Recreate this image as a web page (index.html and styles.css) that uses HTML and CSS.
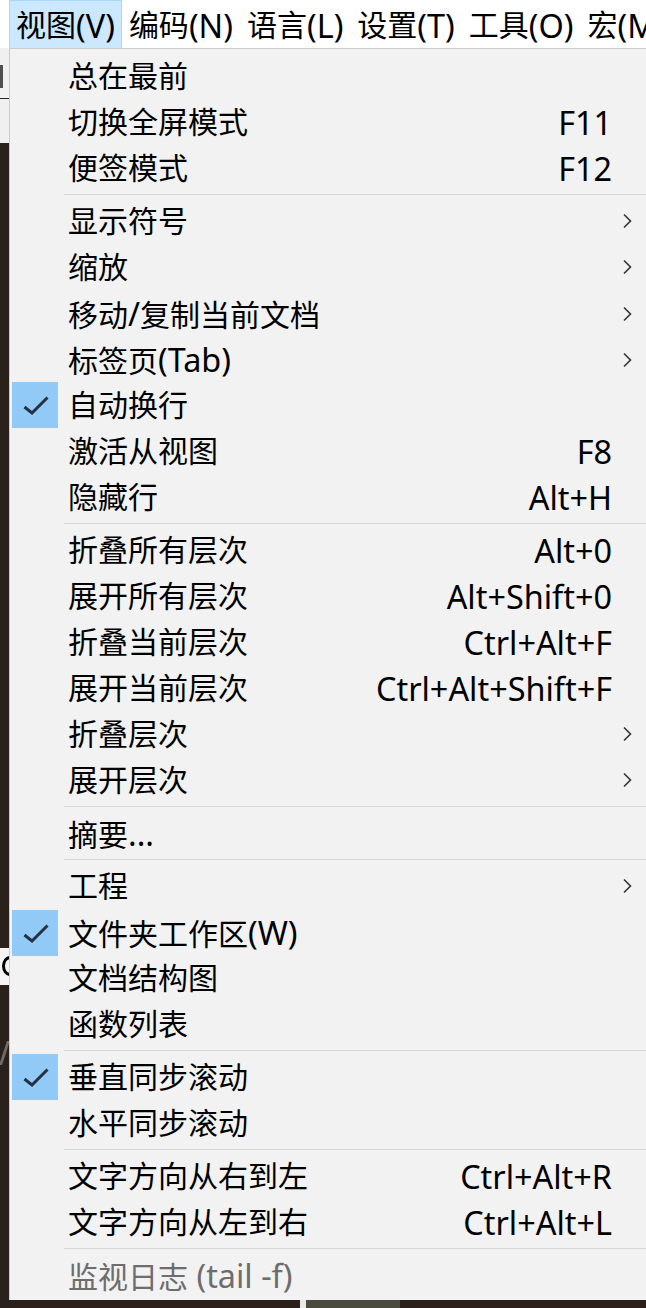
FILE: index.html
```html
<!DOCTYPE html>
<html lang="zh-CN">
<head>
<meta charset="utf-8">
<title>视图菜单</title>
<link rel="stylesheet" href="styles.css">
</head>
<body>
<div class="screen">
  <div class="menubar">
    <div class="mb-item active">视图<span class="lat">(V)</span></div>
    <div class="mb-item">编码<span class="lat">(N)</span></div>
    <div class="mb-item">语言<span class="lat">(L)</span></div>
    <div class="mb-item">设置<span class="lat">(T)</span></div>
    <div class="mb-item">工具<span class="lat">(O)</span></div>
    <div class="mb-item">宏<span class="lat">(M)</span></div>
  </div>
  <div class="main">
    <div class="strip">
      <div class="s-light s1"><span class="s-knob"></span></div>
      <div class="s-line"></div>
      <div class="s-light s2"></div>
      <div class="s-line s-line2"></div>
      <div class="s-dark s3"></div>
      <div class="s-paper s4"><span class="s-arc"></span></div>
      <div class="s-dark s5"><span class="s-slash"></span></div>
    </div>
    <div class="menu">
      <div class="row"><span class="gut"></span><span class="lbl">总在最前</span><span class="key"></span><span class="arr"></span></div>
      <div class="row"><span class="gut"></span><span class="lbl">切换全屏模式</span><span class="key">F11</span><span class="arr"></span></div>
      <div class="row"><span class="gut"></span><span class="lbl">便签模式</span><span class="key">F12</span><span class="arr"></span></div>
      <div class="sep"></div>
      <div class="row"><span class="gut"></span><span class="lbl">显示符号</span><span class="key"></span><span class="arr"><svg width="10" height="16" viewBox="0 0 10 16"><path d="M2 1.5 L8.5 8 L2 14.5" fill="none" stroke="#333" stroke-width="1.6"/></svg></span></div>
      <div class="row"><span class="gut"></span><span class="lbl">缩放</span><span class="key"></span><span class="arr"><svg width="10" height="16" viewBox="0 0 10 16"><path d="M2 1.5 L8.5 8 L2 14.5" fill="none" stroke="#333" stroke-width="1.6"/></svg></span></div>
      <div class="row"><span class="gut"></span><span class="lbl">移动<span class="lat">/</span>复制当前文档</span><span class="key"></span><span class="arr"><svg width="10" height="16" viewBox="0 0 10 16"><path d="M2 1.5 L8.5 8 L2 14.5" fill="none" stroke="#333" stroke-width="1.6"/></svg></span></div>
      <div class="row"><span class="gut"></span><span class="lbl">标签页<span class="lat">(Tab)</span></span><span class="key"></span><span class="arr"><svg width="10" height="16" viewBox="0 0 10 16"><path d="M2 1.5 L8.5 8 L2 14.5" fill="none" stroke="#333" stroke-width="1.6"/></svg></span></div>
      <div class="row"><span class="gut"><span class="chk"><svg width="46" height="46" viewBox="0 0 46 46"><path d="M12.5 25 L20 31 L35.5 15.5" fill="none" stroke="#24313f" stroke-width="3"/></svg></span></span><span class="lbl">自动换行</span><span class="key"></span><span class="arr"></span></div>
      <div class="row"><span class="gut"></span><span class="lbl">激活从视图</span><span class="key">F8</span><span class="arr"></span></div>
      <div class="row"><span class="gut"></span><span class="lbl">隐藏行</span><span class="key">Alt+H</span><span class="arr"></span></div>
      <div class="sep"></div>
      <div class="row"><span class="gut"></span><span class="lbl">折叠所有层次</span><span class="key">Alt+0</span><span class="arr"></span></div>
      <div class="row"><span class="gut"></span><span class="lbl">展开所有层次</span><span class="key">Alt+Shift+0</span><span class="arr"></span></div>
      <div class="row"><span class="gut"></span><span class="lbl">折叠当前层次</span><span class="key">Ctrl+Alt+F</span><span class="arr"></span></div>
      <div class="row"><span class="gut"></span><span class="lbl">展开当前层次</span><span class="key">Ctrl+Alt+Shift+F</span><span class="arr"></span></div>
      <div class="row"><span class="gut"></span><span class="lbl">折叠层次</span><span class="key"></span><span class="arr"><svg width="10" height="16" viewBox="0 0 10 16"><path d="M2 1.5 L8.5 8 L2 14.5" fill="none" stroke="#333" stroke-width="1.6"/></svg></span></div>
      <div class="row"><span class="gut"></span><span class="lbl">展开层次</span><span class="key"></span><span class="arr"><svg width="10" height="16" viewBox="0 0 10 16"><path d="M2 1.5 L8.5 8 L2 14.5" fill="none" stroke="#333" stroke-width="1.6"/></svg></span></div>
      <div class="sep"></div>
      <div class="row"><span class="gut"></span><span class="lbl">摘要<span class="lat">...</span></span><span class="key"></span><span class="arr"></span></div>
      <div class="sep"></div>
      <div class="row"><span class="gut"></span><span class="lbl">工程</span><span class="key"></span><span class="arr"><svg width="10" height="16" viewBox="0 0 10 16"><path d="M2 1.5 L8.5 8 L2 14.5" fill="none" stroke="#333" stroke-width="1.6"/></svg></span></div>
      <div class="row"><span class="gut"><span class="chk"><svg width="46" height="46" viewBox="0 0 46 46"><path d="M12.5 25 L20 31 L35.5 15.5" fill="none" stroke="#24313f" stroke-width="3"/></svg></span></span><span class="lbl">文件夹工作区<span class="lat">(W)</span></span><span class="key"></span><span class="arr"></span></div>
      <div class="row"><span class="gut"></span><span class="lbl">文档结构图</span><span class="key"></span><span class="arr"></span></div>
      <div class="row"><span class="gut"></span><span class="lbl">函数列表</span><span class="key"></span><span class="arr"></span></div>
      <div class="sep"></div>
      <div class="row"><span class="gut"><span class="chk"><svg width="46" height="46" viewBox="0 0 46 46"><path d="M12.5 25 L20 31 L35.5 15.5" fill="none" stroke="#24313f" stroke-width="3"/></svg></span></span><span class="lbl">垂直同步滚动</span><span class="key"></span><span class="arr"></span></div>
      <div class="row"><span class="gut"></span><span class="lbl">水平同步滚动</span><span class="key"></span><span class="arr"></span></div>
      <div class="sep"></div>
      <div class="row"><span class="gut"></span><span class="lbl">文字方向从右到左</span><span class="key">Ctrl+Alt+R</span><span class="arr"></span></div>
      <div class="row"><span class="gut"></span><span class="lbl">文字方向从左到右</span><span class="key">Ctrl+Alt+L</span><span class="arr"></span></div>
      <div class="sep"></div>
      <div class="row disabled"><span class="gut"></span><span class="lbl">监视日志<span class="lat"> (tail -f)</span></span><span class="key"></span><span class="arr"></span></div>
    </div>
  </div>
  <div class="bottom">
    <div class="b-dark b1"></div>
    <div class="b-white"></div>
    <div class="b-olive"></div>
    <div class="b-dark b2"></div>
  </div>
</div>
</body>
</html>
```
FILE: styles.css
```css
html, body {
  margin: 0;
  padding: 0;
}
body {
  width: 646px;
  height: 1308px;
  overflow: hidden;
  background: #2b211c;
  font-family: "Noto Sans", "Noto Sans CJK SC", sans-serif;
  font-size: 30px;
  color: #000;
}
.lat {
  font-size: 32.4px;
}
.screen {
  display: flex;
  flex-direction: column;
  width: 646px;
  height: 1308px;
}
.menubar {
  height: 48px;
  background: #fff;
  display: flex;
  align-items: stretch;
  padding-left: 9px;
  white-space: nowrap;
  overflow: hidden;
  flex: none;
}
.mb-item {
  display: flex;
  align-items: center;
  padding: 0 6px;
  border: 1px solid transparent;
  border-bottom: none;
  line-height: 46px;
  flex: none;
}
.mb-item.active {
  background: #cce8ff;
  border-color: #a9d6fb;
}
.main {
  display: flex;
  height: 1252px;
  flex: none;
}
.strip {
  width: 9px;
  flex: none;
  display: flex;
  flex-direction: column;
  overflow: hidden;
}
.s-light {
  background: #f0f0f0;
}
.s1 {
  height: 50px;
  display: flex;
  align-items: flex-start;
  padding-top: 17px;
  box-sizing: border-box;
}
.s-knob {
  display: block;
  width: 3px;
  height: 23px;
  background: #505050;
}
.s-line {
  height: 1px;
  background: #222;
}
.s2 {
  height: 44px;
}
.s-line2 {
  height: 2px;
}
.s-dark {
  background: #2b211c;
}
.s3 {
  height: 803px;
}
.s4 {
  height: 37px;
  background: #f5f5f5;
  padding: 8px 0 0 2px;
  box-sizing: border-box;
  overflow: hidden;
}
.s-arc {
  display: block;
  width: 16px;
  height: 20px;
  border: 3px solid #000;
  border-radius: 50%;
  box-sizing: border-box;
}
.s5 {
  flex: 1;
  padding: 56px 0 0 3px;
  overflow: hidden;
}
.s-slash {
  display: block;
  width: 3px;
  height: 24px;
  background: #6e6a66;
  transform: skewX(-18deg);
}
.menu {
  flex: 1;
  background: #f2f2f2;
  border-top: 1px solid #cccccc;
  border-left: 1px solid #cccccc;
  padding-top: 4px;
  box-sizing: border-box;
}
.row {
  height: 46px;
  display: grid;
  grid-template-columns: 58px 1fr auto 34px;
  align-items: center;
  white-space: nowrap;
}
.gut {
  height: 46px;
  display: flex;
  align-items: center;
}
.chk {
  display: block;
  width: 46px;
  height: 46px;
  margin-left: 2px;
  background: #91c9f7;
}
.chk svg {
  display: block;
}
.lbl {
  line-height: 46px;
}
.key {
  line-height: 46px;
  text-align: right;
  font-size: 32.4px;
}
.arr {
  display: flex;
  align-items: center;
  justify-content: flex-start;
  padding-left: 10px;
}
.arr svg {
  display: block;
}
.disabled {
  color: #6d6d6d;
}
.sep {
  height: 1px;
  margin: 3px 0 3px 54px;
  background: #d7d7d7;
}
.bottom {
  flex: 1;
  display: flex;
}
.b1 {
  width: 300px;
}
.b-white {
  width: 6px;
  background: #e8e8e8;
}
.b-olive {
  width: 94px;
  background: #4b4a3e;
}
.b2 {
  flex: 1;
}
```
